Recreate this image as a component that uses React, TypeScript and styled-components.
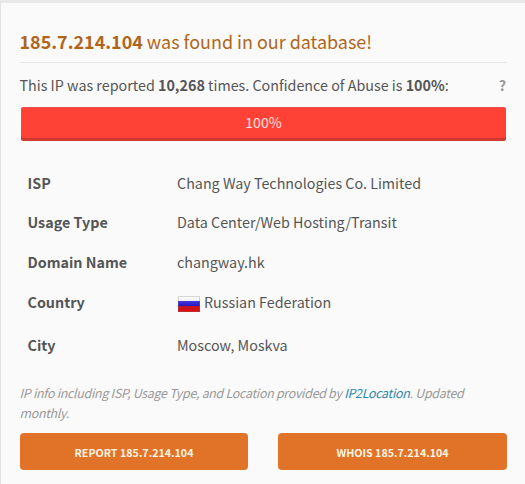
import React from 'react';
import styled, { createGlobalStyle } from 'styled-components';

const GlobalStyle = createGlobalStyle`
  * { box-sizing: border-box; }
  body { margin: 0; background: #fafafa; }
`;

const Panel = styled.main`
  width: 525px;
  height: 484px;
  padding: 24px 18px 0 19px;
  overflow: hidden;
  background: #fafafa;
  border-top: 3px solid #e8e8e8;
  border-left: 1px solid #e3e3e3;
  color: #555;
  font: 14.32px/24px "Noto Sans CJK SC", "Noto Sans", sans-serif;
`;

const Title = styled.h3`
  margin: 0 0 0 -0.5px;
  height: 36px;
  border-bottom: 1px solid #e8e8e8;
  color: #b0661a;
  font-size: 17.95px;
  line-height: 29px;
  font-weight: 400;
  white-space: nowrap;
`;

const Summary = styled.div`
  display: flex;
  justify-content: space-between;
  margin: 10px 1px 0 -0.5px;
  white-space: nowrap;
`;

const Help = styled.b`
  color: #999;
`;

const Meter = styled.div`
  height: 34px;
  margin: 10px 1px 0 1px;
  border-radius: 3px;
  background: #ff4136;
  box-shadow: inset 0 -3px 0 #d0382f, inset 0 1px 0 #e5504a;
  color: #fde4e1;
  text-align: center;
  font-size: 14.1px;
  line-height: 31px;
`;

const Details = styled.dl`
  display: grid;
  grid-template-columns: 149.5px 1fr;
  grid-template-rows: 39px 40px 40px 43px 42px;
  margin: 30px 0 0;
  padding-left: 7.5px;
  white-space: nowrap;
`;

const Term = styled.dt`
  font-weight: 700;
`;

const Value = styled.dd`
  display: flex;
  gap: 4px;
  margin: 0;
`;

const Flag = styled.svg`
  display: block;
  margin: 6px 0 0 1px;
`;

const Note = styled.p`
  margin: 8px 0 0 -0.5px;
  color: #999;
  font-size: 12.4px;
  line-height: 20px;
  font-style: italic;
  letter-spacing: -0.28px;
`;

const Link = styled.a`
  color: #2a86ad;
`;

const Actions = styled.div`
  display: grid;
  grid-template-columns: 228px 229px;
  gap: 30px;
  margin-top: 10px;
`;

const Button = styled.button`
  height: 37px;
  padding: 3px 0 0;
  border: 0;
  border-radius: 4px;
  background: #e17328;
  color: #fff3e2;
  font: 700 10.7px/20px "Noto Sans CJK SC", "Noto Sans", sans-serif;
`;

const RussianFlag = () => (
  <Flag width="22" height="16" viewBox="0 0 22 16" aria-label="Russia">
    <defs>
      <linearGradient id="flagWhite" x2="0" y2="1">
        <stop stopColor="#fff" />
        <stop offset="1" stopColor="#eee" />
      </linearGradient>
      <linearGradient id="flagBlue" x2="0" y2="1">
        <stop stopColor="#4438e0" />
        <stop offset="1" stopColor="#2618bd" />
      </linearGradient>
      <linearGradient id="flagRed" x2="0" y2="1">
        <stop stopColor="#c01424" />
        <stop offset="1" stopColor="#e00d0d" />
      </linearGradient>
    </defs>
    <path d="M0 0h22v5H0z" fill="url(#flagWhite)" />
    <path d="M0 5h22v5H0z" fill="url(#flagBlue)" />
    <path d="M0 10h22v6H0z" fill="url(#flagRed)" />
    <path d="M.5.5h21v15H.5z" fill="none" stroke="#777" strokeOpacity=".3" />
  </Flag>
);

const details: [string, React.ReactNode][] = [
  ['ISP', 'Chang Way Technologies Co. Limited'],
  ['Usage Type', 'Data Center/Web Hosting/Transit'],
  ['Domain Name', 'changway.hk'],
  ['Country', <><RussianFlag />Russian Federation</>],
  ['City', 'Moscow, Moskva'],
];

export default function App() {
  return (
    <Panel>
      <GlobalStyle />
      <Title><b>185.7.214.104</b> was found in our database!</Title>
      <Summary>
        <span>This IP was reported <b>10,268</b> times. Confidence of Abuse is <b>100%</b>:</span>
        <Help>?</Help>
      </Summary>
      <Meter>100%</Meter>
      <Details>
        {details.map(([term, value]) => (
          <React.Fragment key={term}>
            <Term>{term}</Term>
            <Value>{value}</Value>
          </React.Fragment>
        ))}
      </Details>
      <Note>
        IP info including ISP, Usage Type, and Location provided by <Link>IP2Location</Link>. Updated monthly.
      </Note>
      <Actions>
        <Button>REPORT 185.7.214.104</Button>
        <Button>WHOIS 185.7.214.104</Button>
      </Actions>
    </Panel>
  );
}
